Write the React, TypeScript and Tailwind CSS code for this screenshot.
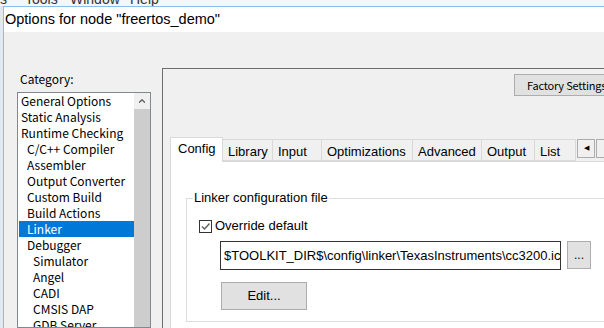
import { ChevronUp } from 'lucide-react';

const categories: { label: string; level: number; selected?: boolean }[] = [
  { label: 'General Options', level: 0 },
  { label: 'Static Analysis', level: 0 },
  { label: 'Runtime Checking', level: 0 },
  { label: 'C/C++ Compiler', level: 1 },
  { label: 'Assembler', level: 1 },
  { label: 'Output Converter', level: 1 },
  { label: 'Custom Build', level: 1 },
  { label: 'Build Actions', level: 1 },
  { label: 'Linker', level: 1, selected: true },
  { label: 'Debugger', level: 1 },
  { label: 'Simulator', level: 2 },
  { label: 'Angel', level: 2 },
  { label: 'CADI', level: 2 },
  { label: 'CMSIS DAP', level: 2 },
  { label: 'GDB Server', level: 2 },
];

const tabs = [
  { label: 'Config', w: 'w-[53px]' },
  { label: 'Library', w: 'w-[50px]' },
  { label: 'Input', w: 'w-[49px]' },
  { label: 'Optimizations', w: 'w-[91px]' },
  { label: 'Advanced', w: 'w-[69px]' },
  { label: 'Output', w: 'w-[53px]' },
  { label: 'List', w: 'w-[41px]' },
];

const indent = ['pl-[2px]', 'pl-[8px]', 'pl-[14px]'];

export default function App() {
  return (
    <div className="w-[604px] h-[328px] overflow-hidden bg-[#f0f0f0] font-['Liberation_Sans',sans-serif] text-black flex flex-col">
      {/* IDE menu bar peeking above the dialog */}
      <div className="h-[6px] overflow-hidden bg-[#f5f6f7] flex items-end text-[14px] leading-[14px] text-[#333]">
        <span className="w-[25px] -ml-[3px] pl-0">ls</span>
        <span className="w-[45px] ml-[3px]">Tools</span>
        <span className="w-[60px]">Window</span>
        <span>Help</span>
      </div>

      <div className="flex flex-1 min-h-0">
        {/* strip of the IDE behind */}
        <div className="w-[3px] bg-[#e4e8ec]" />

        {/* Dialog */}
        <div className="flex-1 flex flex-col border-t border-l border-[#8cbcea] min-w-0">
          {/* Title bar */}
          <div className="h-[25px] bg-white flex items-center pl-[1px] text-[14.5px] shrink-0">
            Options for node "freertos_demo"
          </div>

          <div className="flex flex-1 min-h-0">
            {/* Category column */}
            <div className="w-[158px] shrink-0 pl-[13px] pt-[40px] flex flex-col font-['Noto_Sans_CJK_SC',sans-serif]">
              <div className="text-[12px] leading-[14px] pl-[3px] h-[20px]">Category:</div>
              <div className="w-[134px] flex-1 border border-[#828790] bg-white flex min-h-0 overflow-hidden">
                <div className="flex-1 pl-[1px]">
                  {categories.map((c) => (
                    <div
                      key={c.label}
                      className={`h-[16px] text-[12px] leading-[16px] whitespace-nowrap ${indent[c.level]} ${
                        c.selected ? 'bg-[#0078d7] text-white' : ''
                      }`}
                    >
                      {c.label}
                    </div>
                  ))}
                </div>
                <div className="w-[16px] flex flex-col">
                  <div className="h-[16px] bg-[#f0f0f0] flex items-center justify-center">
                    <ChevronUp size={10} strokeWidth={3} className="text-[#606060]" />
                  </div>
                  <div className="flex-1 bg-[#cdcdcd]" />
                </div>
              </div>
            </div>

            {/* Options panel */}
            <div className="w-[460px] shrink-0 mt-[36px] border-t border-l border-[#6d6d6d] flex flex-col">
              <div className="flex pt-[5px] pl-[351px]">
                <button className="w-[96px] h-[22px] border border-[#adadad] bg-[#e1e1e1] text-[11px] text-left pl-[12px] whitespace-nowrap font-['Noto_Sans_CJK_SC',sans-serif] tracking-[-0.2px]">
                  Factory Settings
                </button>
              </div>

              {/* Tab strip */}
              <div className="flex items-end pl-[7px] mt-[41px] h-[24px]">
                {tabs.map((t, i) =>
                  i === 0 ? (
                    <div
                      key={t.label}
                      className={`${t.w} h-[25px] bg-white border border-b-0 border-[#d9d9d9] text-[13px] leading-[22px] pl-[7px] relative -mb-[1px] z-10`}
                    >
                      {t.label}
                    </div>
                  ) : (
                    <div
                      key={t.label}
                      className={`${t.w} h-[22px] bg-[#f0f0f0] border border-l-0 border-[#d9d9d9] text-[13px] leading-[21px] pl-[5px] pt-[1px] whitespace-nowrap`}
                    >
                      {t.label}
                    </div>
                  )
                )}
                <div className="flex self-start mt-[2px] ml-[1px] gap-[1px]">
                  <div className="w-[18px] h-[19px] border border-[#adadad] bg-[#f0f0f0] flex items-center justify-center text-[7px] text-black">
                    ◀
                  </div>
                  <div className="w-[18px] h-[19px] border border-[#adadad] bg-[#f0f0f0]" />
                </div>
              </div>

              {/* Tab page */}
              <div className="flex-1 ml-[7px] bg-white border-l border-t border-[#d9d9d9] pt-[36px] pl-[15px]">
                <div className="relative w-[440px] h-[124px] border border-[#dcdcdc]">
                  <div className="absolute -top-[8px] left-[6px] bg-white px-[1px] text-[13px] leading-[14px]">
                    Linker configuration file
                  </div>
                  <div className="pt-[20px] pl-[12px] flex flex-col">
                    <label className="flex items-center gap-[3px] h-[14px]">
                      <span className="w-[13px] h-[13px] border border-[#333] flex items-center justify-center">
                        <svg width="11" height="11" viewBox="0 0 11 11">
                          <path d="M2 5.5 L4.5 8 L9.5 2.5" fill="none" stroke="#606060" strokeWidth="1.4" />
                        </svg>
                      </span>
                      <span className="text-[13px] leading-[14px]">Override default</span>
                    </label>
                    <div className="flex mt-[8px] pl-[21px] gap-[6px]">
                      <div className="w-[341px] h-[29px] border border-[#333] text-[13px] leading-[27px] pl-[3px] overflow-hidden whitespace-nowrap">
                        $TOOLKIT_DIR$\config\linker\TexasInstruments\cc3200.icf
                      </div>
                      <button className="w-[24px] h-[28px] border border-[#adadad] bg-[#e1e1e1] text-[12px] leading-[20px]">
                        ...
                      </button>
                    </div>
                    <button className="ml-[22px] mt-[12px] w-[86px] h-[28px] border border-[#adadad] bg-[#e1e1e1] text-[13px]">
                      Edit...
                    </button>
                  </div>
                </div>
              </div>
            </div>
          </div>
        </div>
      </div>
    </div>
  );
}
